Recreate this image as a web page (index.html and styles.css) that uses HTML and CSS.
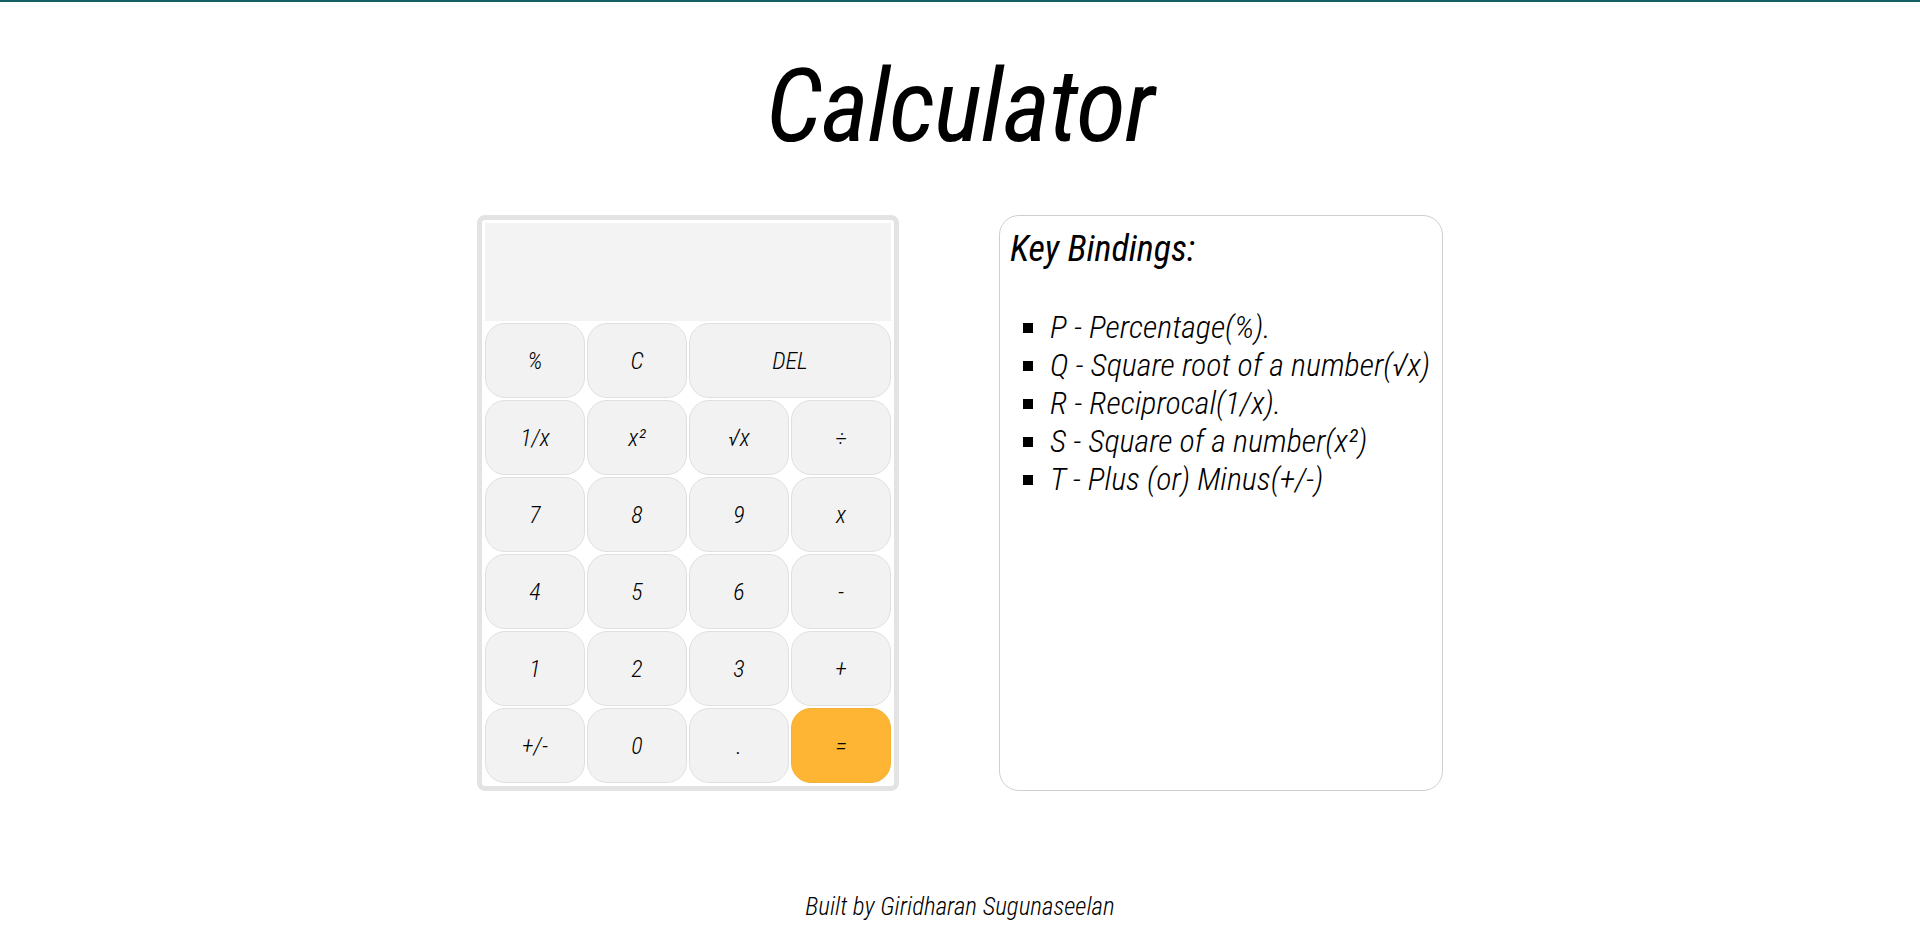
FILE: index.html
```html
<!DOCTYPE html>
<html lang="en">
<head>
<meta charset="utf-8">
<title>Calculator</title>
<link rel="stylesheet" href="styles.css">
</head>
<body>
<div class="topbar"></div>
<h1 class="title">Calculator</h1>
<main class="content">
  <div class="calc">
    <div class="display"></div>
    <button class="key">%</button>
    <button class="key">C</button>
    <button class="key wide">DEL</button>
    <button class="key">1/x</button>
    <button class="key">x²</button>
    <button class="key">√x</button>
    <button class="key">÷</button>
    <button class="key">7</button>
    <button class="key">8</button>
    <button class="key">9</button>
    <button class="key">x</button>
    <button class="key">4</button>
    <button class="key">5</button>
    <button class="key">6</button>
    <button class="key">-</button>
    <button class="key">1</button>
    <button class="key">2</button>
    <button class="key">3</button>
    <button class="key">+</button>
    <button class="key">+/-</button>
    <button class="key">0</button>
    <button class="key">.</button>
    <button class="key equals">=</button>
  </div>
  <section class="bindings">
    <h2 class="bindings-title">Key Bindings:</h2>
    <ul class="bindings-list">
      <li>P - Percentage(%).</li>
      <li>Q - Square root of a number(√x)</li>
      <li>R - Reciprocal(1/x).</li>
      <li>S - Square of a number(x²)</li>
      <li>T - Plus (or) Minus(+/-)</li>
    </ul>
  </section>
</main>
<footer class="footer">Built by Giridharan Sugunaseelan</footer>
</body>
</html>
```

FILE: styles.css
```css
* { box-sizing: border-box; }
html, body { margin: 0; padding: 0; background: #fff; }
body {
  font-family: "Roboto Condensed", Roboto, "Liberation Sans", sans-serif;
  font-stretch: condensed;
  font-style: italic;
  color: #000;
}
.topbar { height: 2px; background: #145f63; }
.title {
  margin: 44px 0 0;
  font-size: 102px;
  font-weight: 400;
  letter-spacing: -1px;
  line-height: normal;
  text-align: center;
}
.content {
  display: flex;
  justify-content: center;
  gap: 100px;
  margin-top: 49px;
}
.calc {
  width: 422px;
  border: 5px solid #e3e3e3;
  border-radius: 8px;
  padding: 3px;
  display: grid;
  grid-template-columns: repeat(4, 1fr);
  grid-template-rows: 98px repeat(6, 75px);
  gap: 2px;
}
.display {
  grid-column: 1 / -1;
  background: #f3f3f3;
}
.key {
  font-family: inherit;
  font-stretch: condensed;
  font-style: italic;
  font-weight: 300;
  font-size: 24px;
  color: #000;
  background: #f2f2f2;
  border: 1px solid #e0e0e0;
  border-radius: 20px;
  padding: 0;
}
.key.wide { grid-column: span 2; }
.key.equals { background: #ffb534; border-color: #f4b13a; }
.bindings {
  width: 444px;
  height: 576px;
  border: 1px solid #cfcfcf;
  border-radius: 20px;
  padding: 12px 10px;
}
.bindings-title {
  margin: 0;
  font-size: 36px;
  font-weight: 400;
  line-height: normal;
}
.bindings-list {
  margin: 38px 0 0;
  padding-left: 40px;
  list-style: square;
  font-size: 32px;
  font-weight: 300;
  line-height: normal;
}
.footer {
  margin-top: 101px;
  text-align: center;
  font-size: 25px;
  font-weight: 300;
}
```
